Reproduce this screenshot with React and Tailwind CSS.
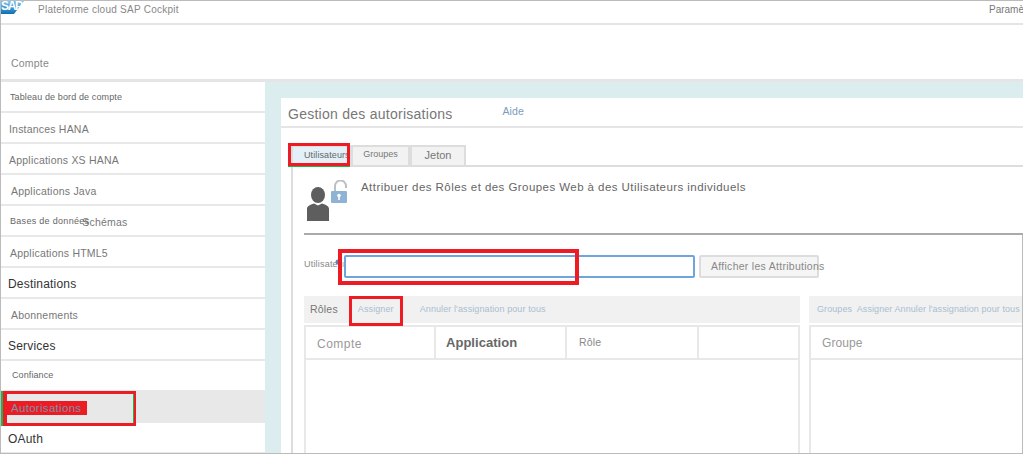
const font = "font-['Liberation_Sans',Arial,sans-serif]";

const sideRows = [
  { label: "Tableau de bord de compte", cls: "pl-[9px] pt-[2px] text-[9px] tracking-[0.12px] text-[#666]" },
  { label: "Instances HANA", cls: "pl-2 pt-[4px] text-[10.5px] tracking-[0.2px] text-[#777]" },
  { label: "Applications XS HANA", cls: "pl-2 pt-[4px] text-[10.5px] tracking-[0.22px] text-[#777]" },
  { label: "Applications Java", cls: "pl-[10px] pt-[4px] text-[10.5px] tracking-[0.22px] text-[#777]" },
  { label: "Bases de données", extra: "Schémas", cls: "pl-[9px] pt-[2px] text-[9px] tracking-[0.3px] text-[#666]" },
  { label: "Applications HTML5", cls: "pl-[9px] pt-[4px] text-[10.5px] tracking-[0.22px] text-[#777]" },
  { label: "Destinations", cls: "pl-[7px] pt-[2px] text-[12px] tracking-[0.2px] text-[#333]" },
  { label: "Abonnements", cls: "pl-[10px] pt-[4px] text-[10.5px] tracking-[0.2px] text-[#777]" },
  { label: "Services", cls: "pl-[7px] pt-[2px] text-[12px] tracking-[0.2px] text-[#333]" },
  { label: "Confiance", cls: "pl-[11px] pt-[1px] text-[9px] tracking-[0.1px] text-[#666]" },
  { label: "Autorisations", active: true, cls: "pl-[10px] pt-[4px] text-[11.5px] tracking-[0.3px] text-[#7f8fa5]" },
  { label: "OAuth", cls: "pl-[7px] pt-[2px] text-[12px] tracking-[0.2px] text-[#333]" },
];

function SapLogo() {
  return (
    <svg width="24" height="14" viewBox="0 0 24 14" className="absolute left-0 top-0">
      <defs>
        <linearGradient id="sapBlue" x1="0" y1="0" x2="0" y2="1">
          <stop offset="0" stopColor="#7cc4f0" />
          <stop offset="1" stopColor="#0f6fb5" />
        </linearGradient>
      </defs>
      <polygon points="0,0 23,0 13,13 0,13" fill="url(#sapBlue)" />
      <text x="0" y="9" fontSize="12" fontWeight="700" fill="#fff" fontFamily="Liberation Sans" textLength="22">SAP</text>
    </svg>
  );
}

function UserLockIcon() {
  return (
    <svg width="42" height="42" viewBox="0 0 42 42" className="-mt-px shrink-0">
      <path d="M29 12V6a5.500 5.500 0 0 1 11 0v2" fill="none" stroke="#bcc0c2" strokeWidth="2" />
      <rect x="25" y="11" width="16" height="12" rx="1" fill="#8fb3d4" />
      <circle cx="33" cy="15.500" r="1.800" fill="#fff" />
      <rect x="32.200" y="15.500" width="1.600" height="4.500" fill="#fff" />
      <ellipse cx="12" cy="15" rx="7" ry="8" fill="#5e5e5e" />
      <path d="M1 41V29c0-3 3-4 7-5.500l4 2 4-2c4 1.500 7 2.500 7 5.500v12z" fill="#5e5e5e" />
    </svg>
  );
}

function SideRow({ row }) {
  return (
    <div className={`flex h-[31px] shrink-0 items-center border-b-2 border-[#e8e8e8] ${row.active ? "bg-[#e8e8e8]" : "bg-white"} ${row.cls}`}>
      <span className="relative z-10 whitespace-nowrap">{row.label}</span>
      {row.extra && <span className="-ml-[7px] mt-[2px] text-[10.5px] tracking-[0.2px] text-[#777]">{row.extra}</span>}
    </div>
  );
}

function Tab({ children, cls }) {
  return (
    <div className={`-mb-px flex h-[21px] items-center border-2 border-b-0 border-[#ddd] ${cls}`}>
      {children}
    </div>
  );
}

function HeadCell({ children, cls }) {
  return <div className={`flex h-full items-center border-r-2 border-[#e8e8e8] whitespace-nowrap ${cls}`}>{children}</div>;
}

export default function App() {
  return (
    <div className={`relative flex h-[454px] w-[1023px] flex-col overflow-hidden border-y border-l border-[#bbb] bg-white ${font}`}>
      <header className="relative flex h-[24px] shrink-0 items-center justify-between border-b-2 border-[#e5e5e5] pl-[37px] text-[#888]">
        <SapLogo />
        <span className="-mt-[6px] text-[10px] tracking-[0.25px]">Plateforme cloud SAP Cockpit</span>
        <span className="-mt-[6px] -mr-[8px] w-[42px] overflow-hidden whitespace-nowrap text-[10px] text-[#777]">Paramètres</span>
      </header>

      <div className="flex h-[57px] shrink-0 items-end border-b-[3px] border-[#e5e5e5] pb-[7px] pl-[10px] text-[10.5px] tracking-[0.2px] text-[#888]">
        Compte
      </div>

      <div className="flex min-h-0 flex-1">
        <aside className="relative flex w-[264px] shrink-0 flex-col overflow-hidden">
          {sideRows.map((row) => (
            <SideRow key={row.label} row={row} />
          ))}
        </aside>

        <main className="min-w-0 flex-1 bg-[#dcedf0] pl-4 pt-4">
          <section className="flex h-full flex-col bg-white">
            <div className="flex h-[30px] shrink-0 items-center border-b-2 border-[#e5e5e5] pl-[7px]">
              <h1 className="mt-[5px] text-[14px] font-normal tracking-[0.26px] text-[#777]">Gestion des autorisations</h1>
              <a className="ml-[50px] text-[10.5px] tracking-[0.1px] text-[#7b9cc0]">Aide</a>
            </div>

            <div className="flex pl-[10px] pt-[17px]">
              <Tab cls="w-[60px] whitespace-nowrap bg-[#e4f0f8] pb-[2px] pl-[11px] text-[9px] tracking-[0.1px] text-[#666]">Utilisateurs</Tab>
              <Tab cls="w-[59px] justify-center bg-[#f2f2f2] pb-[4px] text-[9px] text-[#777]">Groupes</Tab>
              <Tab cls="w-[56px] justify-center bg-[#f2f2f2] pb-[2px] text-[11px] text-[#777]">Jeton</Tab>
            </div>

            <div className="ml-[10px] flex min-h-0 flex-1 flex-col border-l-2 border-t-2 border-[#ddd] pl-[11px] pt-[14px]">
              <div className="flex h-[54px] shrink-0 border-b-2 border-[#aaa] pl-[2px]">
                <UserLockIcon />
                <p className="-mt-[2px] ml-[13px] text-[11.5px] tracking-[0.44px] text-[#666]">
                  Attribuer des Rôles et des Groupes Web à des Utilisateurs individuels
                </p>
              </div>

              <div className="flex h-[61px] shrink-0 items-start pt-[20px]">
                <div className="relative flex h-[23px] w-[40px] items-center whitespace-nowrap pb-[4px] text-[9px] tracking-[0.2px] text-[#888]">
                  Utilisateur
                  <svg width="6" height="6" viewBox="0 0 6 6" className="absolute left-[31px] top-[4px]">
                    <circle cx="3" cy="3" r="2.500" fill="#5b86b5" />
                  </svg>
                </div>
                <div className="relative h-[23px] w-[351px] rounded-[2px] border-2 border-[#6ea5dc] bg-white" />
                <button className="ml-[4px] flex h-[23px] w-[120px] items-center whitespace-nowrap rounded-[2px] border-2 border-[#ddd] bg-[#f5f5f5] pl-[10px] text-[10.5px] tracking-[0.28px] text-[#888]">
                  Afficher les Attributions
                </button>
              </div>

              <div className="flex min-h-0 flex-1 gap-[9px]">
                <div className="flex w-[496px] shrink-0 flex-col">
                  <div className="flex h-[27px] shrink-0 items-center bg-[#f1f1f1] pl-[6px]">
                    <span className="text-[10.5px] tracking-[0.2px] text-[#777]">Rôles</span>
                    <span className="ml-[20px] text-[9px] tracking-[0.1px] text-[#a9bed0]">Assigner</span>
                    <span className="ml-[26px] text-[9px] tracking-[0.1px] text-[#a9bed0]">Annuler l'assignation pour tous</span>
                  </div>
                  <div className="mt-[2px] flex-1 border-x-2 border-t-2 border-[#e8e8e8]">
                    <div className="flex h-[33px] border-b-2 border-[#e8e8e8]">
                      <HeadCell cls="w-[130px] pl-[11px] pt-[3px] text-[12px] tracking-[0.5px] text-[#999]">Compte</HeadCell>
                      <HeadCell cls="w-[131px] pl-[10px] text-[13px] font-bold tracking-[0.03px] text-[#666]">Application</HeadCell>
                      <HeadCell cls="w-[132px] pl-[12px] text-[10.5px] tracking-[0.2px] text-[#888]">Rôle</HeadCell>
                    </div>
                  </div>
                </div>

                <div className="flex min-w-0 flex-1 flex-col">
                  <div className="flex h-[27px] shrink-0 items-center whitespace-nowrap bg-[#f1f1f1] pl-[8px] text-[9px] tracking-[0.08px] text-[#a9bed0]">
                    Groupes&nbsp; Assigner Annuler l'assignation pour tous
                  </div>
                  <div className="mt-[2px] flex-1 border-l-2 border-t-2 border-[#e8e8e8]">
                    <div className="flex h-[33px] items-center border-b-2 border-[#e8e8e8] pl-[11px] pt-[1px] text-[12px] tracking-[0.1px] text-[#999]">
                      Groupe
                    </div>
                  </div>
                </div>
              </div>
            </div>
          </section>
        </main>
      </div>

      {/* annotations over the screenshot */}
      <div className="absolute left-[1021px] top-[234px] h-[219px] w-px bg-[#bbb]" />
      <div className="absolute left-[5px] top-[400px] z-0 h-[14px] w-[81px] bg-[#ed1c24]" />
      <div className="absolute left-0 top-[390px] h-[35px] w-[133px] border-b border-l-2 border-r border-[#22b14c]" />
      <div className="absolute left-[2px] top-[390px] h-[35px] w-[133px] border-y-[3px] border-l-4 border-r-2 border-[#ed1c24]" />
      <div className="absolute left-[287px] top-[142px] h-[24px] w-[62px] border-b border-[#22b14c]" />
      <div className="absolute left-[287px] top-[142px] h-[23px] w-[62px] border-[3px] border-[#ed1c24]" />
      <div className="absolute left-[337px] top-[248px] h-[36px] w-[241px] border-4 border-[#ed1c24]" />
      <div className="absolute left-[348px] top-[295px] h-[30px] w-[54px] border-[3px] border-[#ed1c24]" />
    </div>
  );
}
